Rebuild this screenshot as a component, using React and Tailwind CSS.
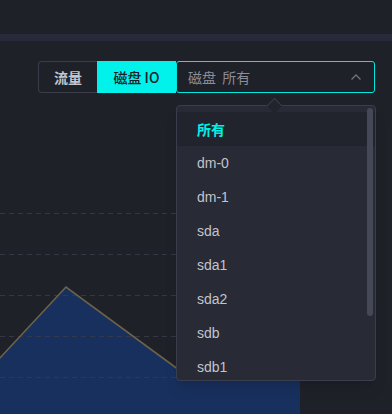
import React from "react";

const items = ["dm-0", "dm-1", "sda", "sda1", "sda2", "sdb", "sdb1"];

export default function App() {
  return (
    <div
      className="relative w-[392px] h-[414px] overflow-hidden bg-[#1f2129]"
      style={{ fontFamily: '"Liberation Sans", "Noto Sans CJK SC", sans-serif' }}
    >
      <div className="h-[34px]" />
      <div className="h-[7px] bg-[#272a38]" />
      <div className="h-[20px]" />
      {/* toolbar */}
      <div className="flex h-[32px] pl-[38px]">
        <div className="flex items-center justify-center w-[59px] h-full border border-[#3a3d49] border-r-0 rounded-l-[4px] text-[14px] font-bold text-[#c4c6cf]" style={{ fontFamily: '"Noto Sans CJK SC", sans-serif' }}>
          流量
        </div>
        <div className="flex items-center justify-center w-[79px] h-full bg-[#00f2ea] text-[14px] font-medium text-[#1f2129]" style={{ fontFamily: '"Noto Sans CJK SC", sans-serif' }}>
          磁盘 IO
        </div>
        <div className="flex items-center justify-between w-[199px] h-full border border-[#00e8e0] rounded-[3px] pl-[11px] pr-[12px]">
          <span className="text-[14px] text-[#8b8d97]" style={{ fontFamily: '"Noto Sans CJK SC", sans-serif' }}>磁盘&nbsp;&nbsp;所有</span>
          <svg width="12" height="8" viewBox="0 0 12 8" fill="none">
            <path d="M1.5 6.5 L6 2 L10.5 6.5" stroke="#70737e" strokeWidth="1.3" />
          </svg>
        </div>
      </div>
      {/* chart */}
      <svg className="block" width="392" height="321" viewBox="0 93 392 321">
        <defs>
          <clipPath id="plot">
            <rect x="0" y="93" width="300" height="321" />
          </clipPath>
        </defs>
        <g clipPath="url(#plot)">
          <polygon points="0,358 66,287 190,378 300,340 300,414 0,414" fill="#18305e" />
          {[213, 254, 295, 336, 377].map((y) => (
            <line key={y} x1="0" x2="300" y1={y + 0.5} y2={y + 0.5} stroke="#363a4a" strokeDasharray="5 4" strokeWidth="1" opacity="0.9" />
          ))}
          <polyline points="-2,360 66,287 190,378 300,340" fill="none" stroke="#6e6247" strokeWidth="1.6" />
        </g>
      </svg>
      {/* dropdown */}
      <div className="absolute left-[176px] top-[105px] w-[200px] h-[276px] bg-[#282a36] border border-[#3a3d4b] rounded-[4px] shadow-lg">
        <div className="absolute left-[92px] -top-[6px] w-[11px] h-[11px] rotate-45 bg-[#21232d] border-l border-t border-[#3a3d4b]" />
        <div className="relative overflow-hidden h-full rounded-[4px] pt-[6px]">
          <div className="flex items-center h-[34px] pl-[20px] bg-[#21232d] text-[14px] font-bold text-[#00f0e8]" style={{ fontFamily: '"Noto Sans CJK SC", sans-serif' }}>
            所有
          </div>
          {items.map((t) => (
            <div key={t} className="flex items-center h-[34px] pl-[20px] text-[14px] text-[#c2c4cd]">
              {t}
            </div>
          ))}
          <div className="absolute right-[2px] top-[2px] w-[6px] h-[208px] rounded-full bg-[#454856]" />
        </div>
      </div>
    </div>
  );
}
